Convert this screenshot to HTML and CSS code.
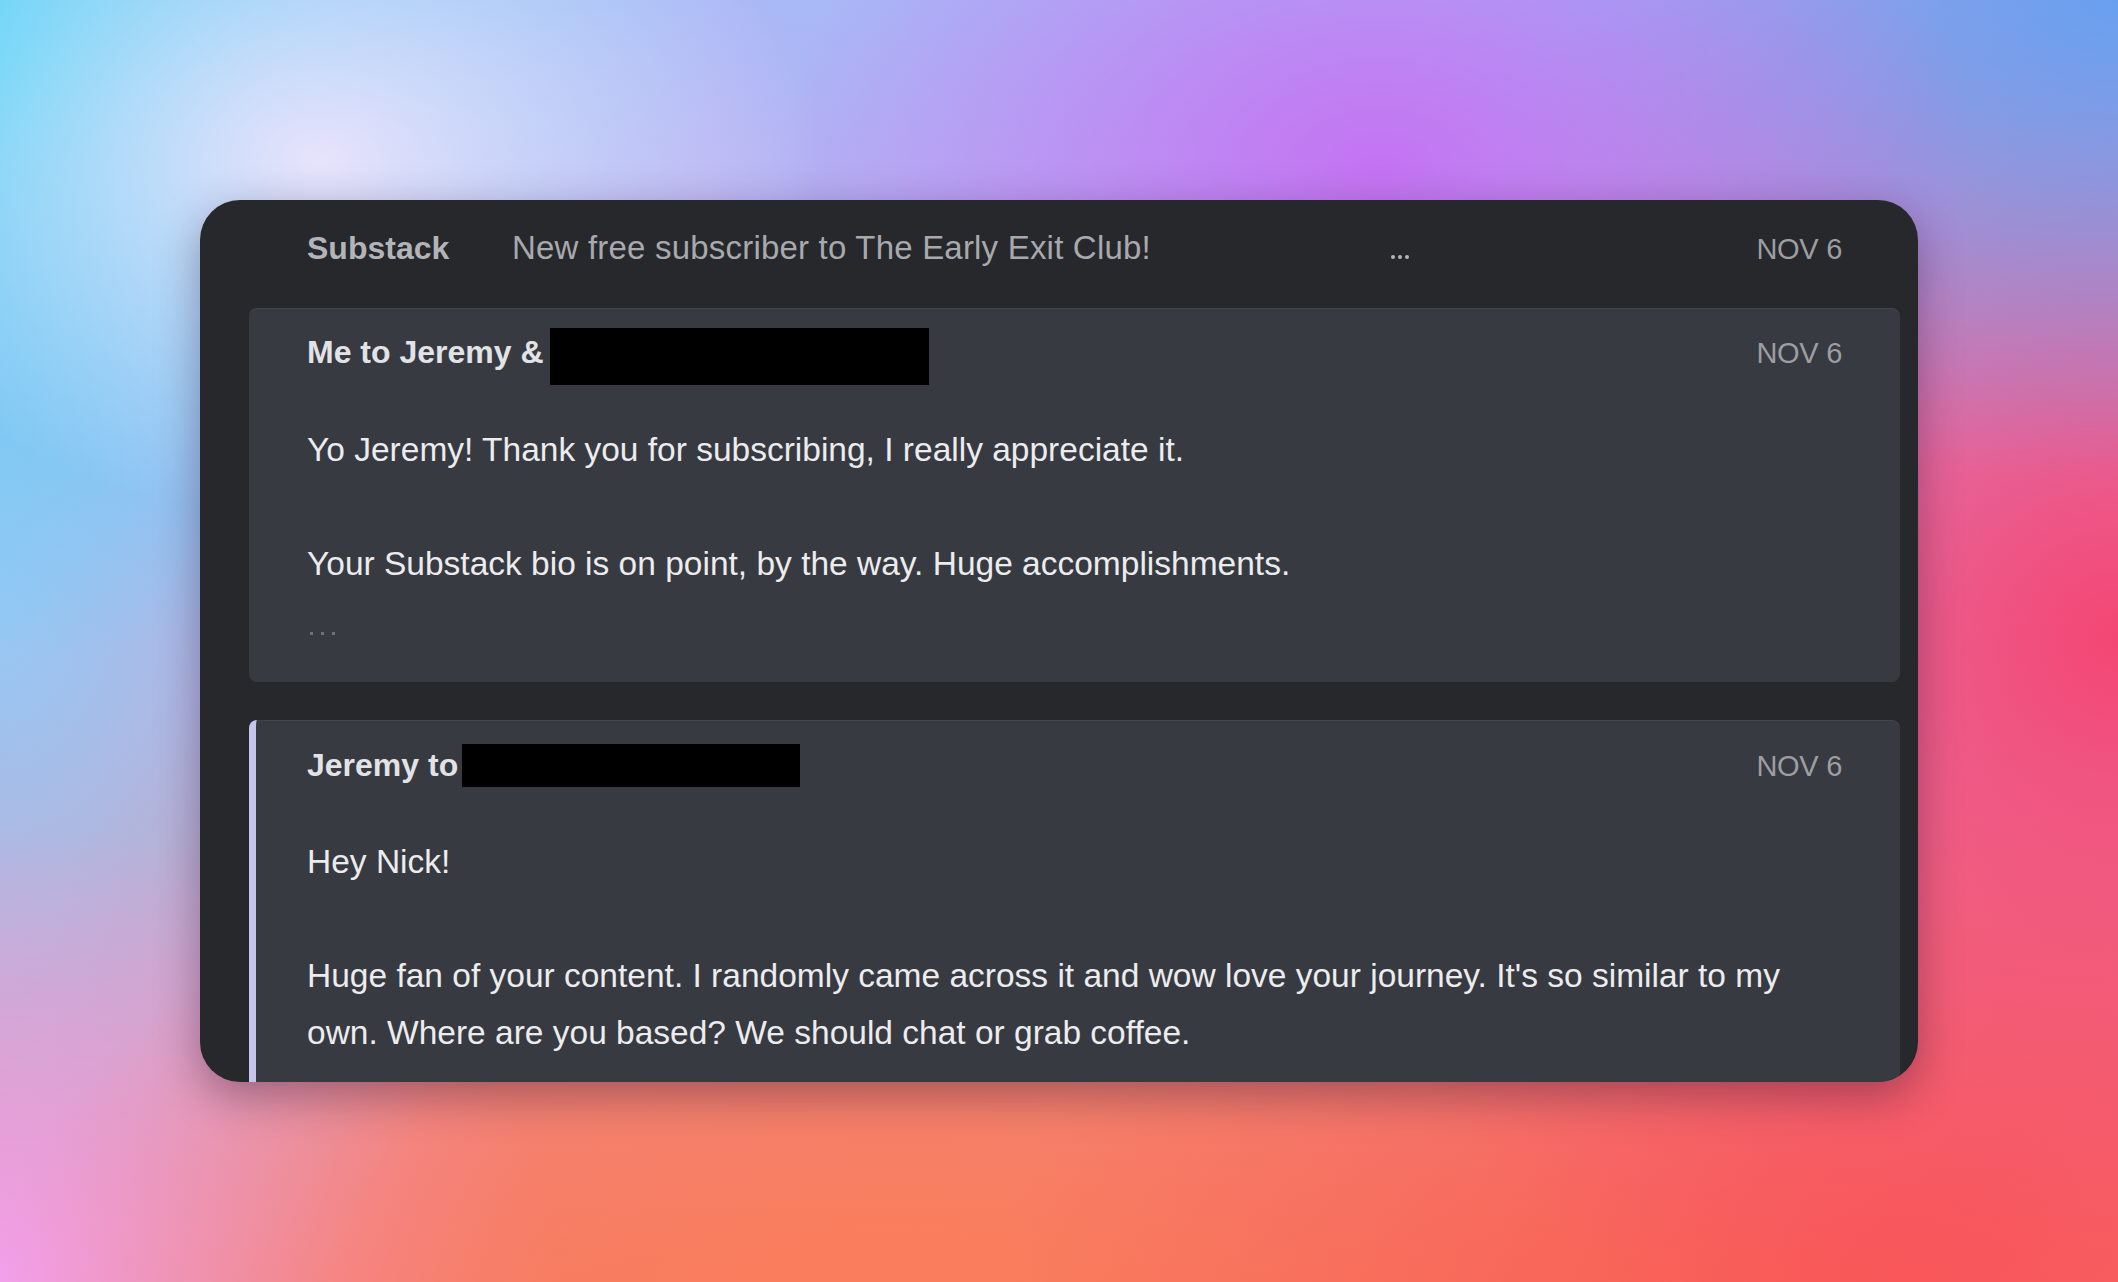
FILE: index.html
```html
<!DOCTYPE html>
<html lang="en">
<head>
<meta charset="utf-8">
<title>Thread</title>
<link rel="stylesheet" href="styles.css">
</head>
<body>
<main class="stage">
  <section class="thread">
    <div class="row-head">
      <span class="from">Substack</span>
      <span class="subject">New free subscriber to The Early Exit Club!</span>
      <span class="snippet"><i></i><i></i><i></i></span>
      <span class="date">NOV 6</span>
    </div>

    <article class="msg">
      <header class="msg-head">
        <span class="who">Me to Jeremy &amp;<span class="redact redact--wide"></span></span>
        <span class="date">NOV 6</span>
      </header>
      <div class="msg-body">
        <p>Yo Jeremy! Thank you for subscribing, I really appreciate it.</p>
        <p>Your Substack bio is on point, by the way. Huge accomplishments.</p>
        <div class="trim"><i></i><i></i><i></i></div>
      </div>
    </article>

    <article class="msg msg--open">
      <header class="msg-head">
        <span class="who">Jeremy to<span class="redact redact--short"></span></span>
        <span class="date">NOV 6</span>
      </header>
      <div class="msg-body">
        <p>Hey Nick!</p>
        <p>Huge fan of your content. I randomly came across it and wow love your journey. It's so similar to my own. Where are you based? We should chat or grab coffee.</p>
      </div>
    </article>
  </section>
</main>
</body>
</html>
```

FILE: styles.css
```css
html, body {
  margin: 0;
  padding: 0;
}

body {
  width: 2118px;
  height: 1282px;
  overflow: hidden;
  font-family: "Liberation Sans", Arial, sans-serif;
  background-color: #d9a4cf;
  background-image:
    radial-gradient(ellipse 500px 360px at 320px 160px, rgba(238, 228, 252, 0.95) 0%, rgba(238, 228, 252, 0) 100%),
    radial-gradient(ellipse 720px 600px at 0px 60px, rgba(78, 212, 246, 1) 0%, rgba(78, 212, 246, 0) 100%),
    radial-gradient(ellipse 600px 420px at 1380px 170px, rgba(196, 114, 242, 1) 0%, rgba(196, 114, 242, 0) 100%),
    radial-gradient(ellipse 700px 480px at 2118px 0px, rgba(104, 160, 240, 1) 0%, rgba(104, 160, 240, 0) 100%),
    radial-gradient(ellipse 820px 820px at 2118px 640px, rgba(244, 70, 116, 1) 0%, rgba(244, 70, 116, 0) 100%),
    radial-gradient(ellipse 900px 520px at 1900px 1282px, rgba(250, 90, 82, 1) 0%, rgba(250, 90, 82, 0) 100%),
    radial-gradient(ellipse 900px 480px at 900px 1282px, rgba(250, 126, 92, 1) 0%, rgba(250, 126, 92, 0) 100%),
    radial-gradient(ellipse 560px 460px at 0px 1282px, rgba(242, 160, 236, 1) 0%, rgba(242, 160, 236, 0) 100%),
    radial-gradient(ellipse 520px 900px at 0px 600px, rgba(150, 200, 244, 1) 0%, rgba(150, 200, 244, 0) 100%),
    linear-gradient(180deg, #a8b8f6 0%, #c4a8ee 35%, #e890a8 70%, #f47a66 100%);
}

.stage {
  padding: 200px 0 0 200px;
}

.thread {
  box-sizing: border-box;
  width: 1718px;
  height: 882px;
  padding: 19px 18px 0 49px;
  background: #26282c;
  border-radius: 40px;
  overflow: hidden;
  box-shadow: 0 14px 44px rgba(40, 18, 50, 0.38);
}

/* collapsed header row */
.row-head {
  display: flex;
  align-items: baseline;
  height: 57px;
  line-height: 57px;
  padding: 0 58px;
  margin-bottom: 32px;
}

.from {
  flex: 0 0 205px;
  font-size: 32px;
  font-weight: 700;
  color: #b3b4b8;
}

.subject {
  flex: 0 0 879px;
  font-size: 33px;
  letter-spacing: 0.2px;
  color: #a8a9ad;
}

.snippet {
  flex: 1;
  align-self: flex-start;
  display: flex;
  gap: 3px;
  margin-top: 36px;
}

.snippet i {
  width: 4px;
  height: 4px;
  border-radius: 50%;
  background: #b3b4b8;
}

.date {
  font-size: 29px;
  color: #9d9ea2;
  letter-spacing: -0.3px;
}

/* message cards */
.msg {
  background: #373a41;
  border-radius: 8px;
  padding: 16px 58px 47px 58px;
  box-shadow: inset 0 1px 0 rgba(255, 255, 255, 0.06);
}

.msg + .msg {
  margin-top: 38px;
}

.msg--open {
  border-left: 7px solid #c4c4ec;
  padding: 17px 58px 60px 51px;
}

.msg-head {
  display: flex;
  justify-content: space-between;
  align-items: baseline;
  height: 57px;
  line-height: 57px;
}

.who {
  font-size: 32px;
  font-weight: 700;
  color: #e2e3e6;
}

.redact {
  display: inline-block;
  background: #000;
}

.redact--wide {
  width: 379px;
  height: 57px;
  margin-left: 6px;
  vertical-align: -22px;
}

.redact--short {
  width: 338px;
  height: 43px;
  margin-left: 4px;
  vertical-align: -11px;
}

.msg-body {
  margin-top: 40px;
  font-size: 33.5px;
  line-height: 57px;
  color: #ececee;
}

.msg--open .msg-body {
  margin-top: 39px;
}

.msg-body p {
  margin: 0;
}

.msg-body p + p {
  margin-top: 57px;
}

.trim {
  display: flex;
  gap: 8px;
  margin-top: 40px;
  padding-left: 3px;
  height: 3px;
}

.trim i {
  width: 3px;
  height: 3px;
  background: #6e7076;
}
```
